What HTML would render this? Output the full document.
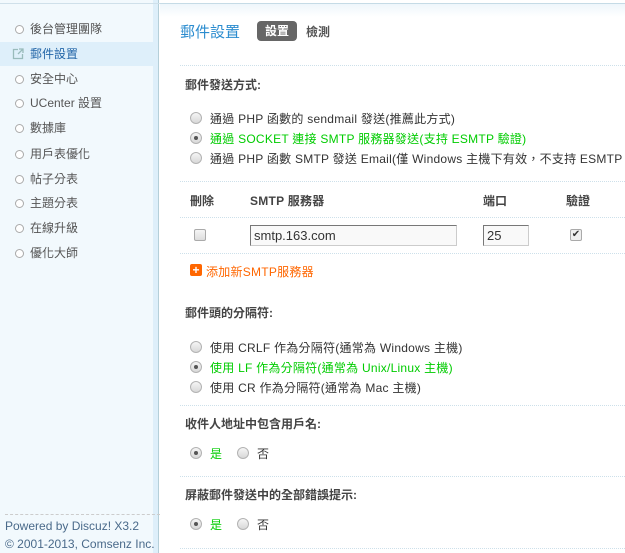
<!DOCTYPE html>
<html><head><meta charset="utf-8"><style>
*{margin:0;padding:0;box-sizing:border-box}
body{width:625px;height:553px;overflow:hidden;background:#fff;font:12px "Liberation Sans","Noto Sans CJK TC",sans-serif;color:#333;position:relative}
.side{position:absolute;left:0;top:0;width:153px;height:553px;background:#f2f9fd}
.strip{position:absolute;left:153px;top:0;width:6px;height:553px;background:#deeffa;border-right:1px solid #b5cfd9}
.top{position:absolute;left:160px;top:3px;right:0;height:14px;border-top:1px solid #c5dbe6;background:linear-gradient(#eef6fb,#fff)}
.topl{position:absolute;left:0;top:0;width:160px;height:4px;border-bottom:1px solid #cfe0ea}
.it{position:absolute;left:0;width:153px;height:24px;line-height:24px;padding-left:30px;color:#555;font-size:12px}
.it:before{content:"";position:absolute;left:15px;top:8px;width:7px;height:7px;border:1px solid #aaa;border-radius:50%;background:#fff}
.it.act{background:#deeffa;color:#2366a8}
.it.act:before{display:none}
.a{position:absolute;white-space:nowrap}
.m{letter-spacing:0.25px}
.b{font-weight:bold;color:#444}
.g{color:#00cc00}
.dot{position:absolute;left:180px;right:0;border-top:1px dotted #cde0ea}
.r{position:absolute;width:12px;height:12px;border-radius:50%;border:1px solid #b3b3b3;background:linear-gradient(#f5f5f5,#d8d8d8)}
.r.on:after{content:"";position:absolute;left:3px;top:3px;width:4px;height:4px;border-radius:50%;background:#555}
.foot{position:absolute;left:5px;color:#4a6a8a;font-size:12px}
</style></head><body>
<div class="side"></div><div class="strip"></div><div class="topl"></div><div class="top"></div>
<div class="it" style="top:17px">後台管理團隊</div>
<div class="it act" style="top:42px">郵件設置<svg style="position:absolute;left:12px;top:6px" width="12" height="12" viewBox="0 0 12 12"><path d="M6 1.5H1.5v9h9V6" fill="none" stroke="#9bb" stroke-width="1.3"/><path d="M7 1h4v4M11 1L6 6" fill="none" stroke="#9bb" stroke-width="1.3"/></svg></div>
<div class="it" style="top:67px">安全中心</div>
<div class="it" style="top:91px">UCenter 設置</div>
<div class="it" style="top:116px">數據庫</div>
<div class="it" style="top:142px">用戶表優化</div>
<div class="it" style="top:167px">帖子分表</div>
<div class="it" style="top:191px">主題分表</div>
<div class="it" style="top:216px">在線升級</div>
<div class="it" style="top:241px">優化大師</div>
<div style="position:absolute;left:5px;top:514px;width:155px;border-top:1px dashed #ccc"></div>
<div class="foot" style="top:519px">Powered by Discuz! X3.2</div>
<div class="foot" style="top:537px">© 2001-2013, Comsenz Inc.</div>

<div class="a" style="left:180px;top:21px;font-size:15px;color:#2b8ccf">郵件設置</div>
<div class="a" style="left:257px;top:21px;width:40px;height:20px;background:#666;border-radius:4px;color:#fff;font-weight:bold;text-align:center;line-height:20px">設置</div>
<div class="a b" style="left:306px;top:23px;color:#555">檢測</div>
<div class="dot" style="top:65px"></div>
<div class="a b" style="left:185px;top:76px">郵件發送方式:</div>
<div class="r" style="left:190px;top:112px"></div><div class="a m" style="left:210px;top:110px">通過 PHP 函數的 sendmail 發送(推薦此方式)</div>
<div class="r on" style="left:190px;top:132px"></div><div class="a g m" style="left:210px;top:130px">通過 SOCKET 連接 SMTP 服務器發送(支持 ESMTP 驗證)</div>
<div class="r" style="left:190px;top:152px"></div><div class="a m" style="left:210px;top:150px">通過 PHP 函數 SMTP 發送 Email(僅 Windows 主機下有效，不支持 ESMTP 驗證)</div>
<div class="dot" style="top:181px"></div>
<div class="a b" style="left:190px;top:192px">刪除</div>
<div class="a b m" style="left:250px;top:192px">SMTP 服務器</div>
<div class="a b" style="left:483px;top:192px">端口</div>
<div class="a b" style="left:566px;top:192px">驗證</div>
<div class="dot" style="top:217px"></div>
<div class="a" style="left:194px;top:229px;width:12px;height:12px;border:1px solid #aaa;border-radius:2px;background:linear-gradient(#f5f5f5,#ddd)"></div>
<div class="a" style="left:250px;top:225px;width:207px;height:21px;border:1px solid #999;border-color:#777 #ccc #ccc #777;background:#f9f9f9;padding-left:3px;line-height:19px;font-size:13px">smtp.163.com</div>
<div class="a" style="left:483px;top:225px;width:46px;height:21px;border:1px solid #999;border-color:#777 #ccc #ccc #777;background:#f9f9f9;padding-left:3px;line-height:19px;font-size:13px">25</div>
<div class="a" style="left:570px;top:229px;width:12px;height:12px;border:1px solid #aaa;border-radius:2px;background:#eee;font-size:10px;line-height:10px;text-align:center;color:#333">✔</div>
<div class="dot" style="top:253px"></div>
<div class="a" style="left:190px;top:264px;width:12px;height:12px;background:#f60;border-radius:2px;color:#fff;font-weight:bold;font-size:12px;line-height:12px;text-align:center">+</div>
<div class="a m" style="left:206px;top:263px;color:#f60">添加新SMTP服務器</div>
<div class="a b" style="left:185px;top:304px">郵件頭的分隔符:</div>
<div class="r" style="left:190px;top:341px"></div><div class="a m" style="left:210px;top:339px">使用 CRLF 作為分隔符(通常為 Windows 主機)</div>
<div class="r on" style="left:190px;top:361px"></div><div class="a g m" style="left:210px;top:359px">使用 LF 作為分隔符(通常為 Unix/Linux 主機)</div>
<div class="r" style="left:190px;top:381px"></div><div class="a m" style="left:210px;top:379px">使用 CR 作為分隔符(通常為 Mac 主機)</div>
<div class="dot" style="top:405px"></div>
<div class="a b" style="left:185px;top:415px">收件人地址中包含用戶名:</div>
<div class="r on" style="left:190px;top:447px"></div><div class="a g" style="left:210px;top:445px">是</div>
<div class="r" style="left:237px;top:447px"></div><div class="a" style="left:257px;top:445px">否</div>
<div class="dot" style="top:476px"></div>
<div class="a b" style="left:185px;top:486px">屏蔽郵件發送中的全部錯誤提示:</div>
<div class="r on" style="left:190px;top:518px"></div><div class="a g" style="left:210px;top:516px">是</div>
<div class="r" style="left:237px;top:518px"></div><div class="a" style="left:257px;top:516px">否</div>
<div class="dot" style="top:548px"></div>
</body></html>
